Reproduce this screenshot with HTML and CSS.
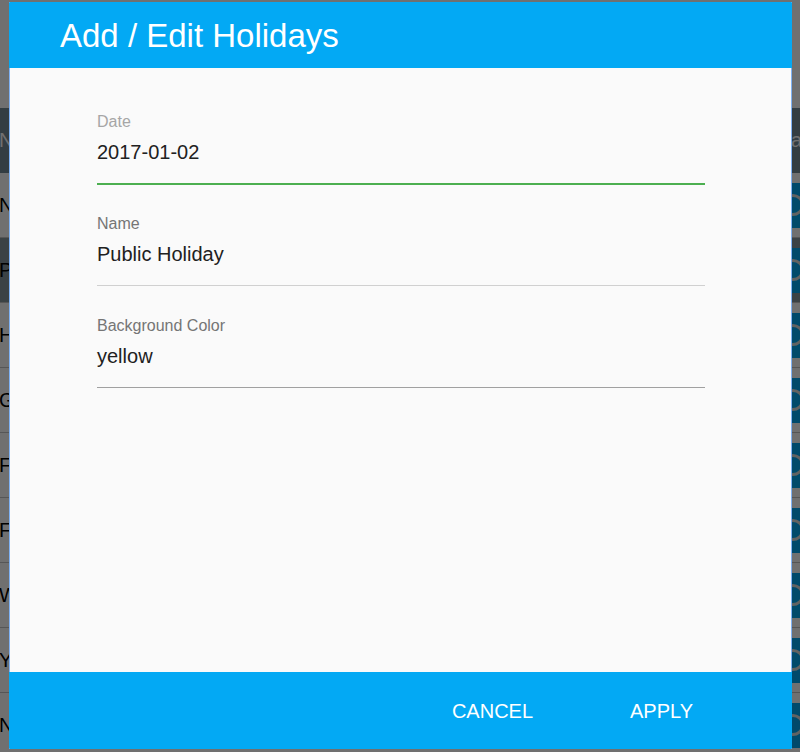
FILE: index.html
```html
<!DOCTYPE html>
<html lang="en">
<head>
<meta charset="utf-8">
<title>Add / Edit Holidays</title>
<link rel="stylesheet" href="styles.css">
</head>
<body>
<div class="page" aria-hidden="true">
  <div class="table">
    <div class="row head"><span class="cell-name">Na</span><span class="cell-end head-end">na</span></div>
    <div class="row"><span class="cell-name">Ne</span><span class="cell-end"><span class="btn"><span class="ring"></span></span></span></div>
    <div class="row selected"><span class="cell-name">Pu</span><span class="cell-end"><span class="btn"><span class="ring"></span></span></span></div>
    <div class="row"><span class="cell-name">Hu</span><span class="cell-end"><span class="btn"><span class="ring"></span></span></span></div>
    <div class="row"><span class="cell-name">Go</span><span class="cell-end"><span class="btn"><span class="ring"></span></span></span></div>
    <div class="row"><span class="cell-name">Fa</span><span class="cell-end"><span class="btn"><span class="ring"></span></span></span></div>
    <div class="row"><span class="cell-name">Fr</span><span class="cell-end"><span class="btn"><span class="ring"></span></span></span></div>
    <div class="row"><span class="cell-name">Wo</span><span class="cell-end"><span class="btn"><span class="ring"></span></span></span></div>
    <div class="row"><span class="cell-name">Yo</span><span class="cell-end"><span class="btn"><span class="ring"></span></span></span></div>
    <div class="row"><span class="cell-name">Na</span><span class="cell-end"><span class="btn"><span class="ring"></span></span></span></div>
  </div>
</div>
<div class="overlay"></div>
<div class="dialog">
  <div class="dialog-title">Add / Edit Holidays</div>
  <div class="dialog-body">
    <div class="field focused">
      <div class="label label-light">Date</div>
      <div class="value">2017-01-02</div>
    </div>
    <div class="field">
      <div class="label">Name</div>
      <div class="value">Public Holiday</div>
    </div>
    <div class="field dark-line">
      <div class="label">Background Color</div>
      <div class="value">yellow</div>
    </div>
  </div>
  <div class="dialog-actions">
    <button class="action">CANCEL</button>
    <button class="action">APPLY</button>
  </div>
</div>
</body>
</html>
```
FILE: styles.css
```css
html, body {
  margin: 0;
  padding: 0;
  width: 800px;
  height: 752px;
  overflow: hidden;
  font-family: "Liberation Sans", Arial, sans-serif;
  background: #ffffff;
}

.page {
  width: 800px;
  height: 752px;
  padding-top: 108px;
  box-sizing: border-box;
}

.table {
  display: flex;
  flex-direction: column;
}

.row {
  height: 65px;
  display: flex;
  align-items: center;
  justify-content: space-between;
  border-bottom: 1px solid #c4c4c4;
  box-sizing: border-box;
  font-size: 20px;
  color: #000;
  background: #fff;
}

.row.head {
  background: #748b96;
  color: #ffffff;
  border-bottom: none;
}

.row.selected {
  background: #87969e;
}

.cell-name {
  margin-left: -1px;
  white-space: nowrap;
}

.cell-end {
  width: 20px;
  height: 45px;
  display: flex;
  align-items: center;
}

.head-end {
  color: #ffffff;
  margin-left: -6px;
}

.btn {
  width: 40px;
  height: 45px;
  background: #03a9f4;
  display: flex;
  align-items: center;
  padding-left: 2px;
  box-sizing: border-box;
}

.ring {
  width: 16px;
  height: 16px;
  border: 3px solid #e0e0e0;
  border-radius: 50%;
}

.overlay {
  position: absolute;
  left: 0;
  top: 0;
  width: 800px;
  height: 752px;
  background: rgba(0, 0, 0, 0.56);
}

.dialog {
  position: absolute;
  left: 9px;
  top: 2px;
  width: 783px;
  height: 747px;
  box-sizing: border-box;
  border: 1px solid #7fb2f4;
  border-top-color: #03a9f4;
  border-bottom-color: #03a9f4;
  display: flex;
  flex-direction: column;
  background: #fafafa;
}

.dialog-title {
  height: 65px;
  line-height: 65px;
  background: #03a9f4;
  color: #ffffff;
  font-size: 33px;
  padding-left: 51px;
  margin: 0 -1px;
}

.dialog-body {
  flex: 1;
  padding: 44px 0 0 87px;
}

.field {
  width: 608px;
  padding-bottom: 17px;
  border-bottom: 1px solid #d0d0d0;
  margin-bottom: 30px;
}

.field.focused {
  border-bottom: 2px solid #4caf50;
  margin-bottom: 29px;
}

.field.dark-line {
  border-bottom-color: #a0a0a0;
}

.label {
  font-size: 16px;
  line-height: 20px;
  color: #757575;
  margin-bottom: 6px;
}

.label-light {
  color: #a6a6a6;
}

.value {
  font-size: 20px;
  line-height: 28px;
  color: #212121;
}

.dialog-actions {
  height: 76px;
  background: #03a9f4;
  display: flex;
  justify-content: flex-end;
  align-items: center;
  padding: 3px 46px 0 0;
  box-sizing: border-box;
  margin: 0 -1px;
}

.action {
  width: 169px;
  height: 48px;
  border: none;
  background: transparent;
  color: #ffffff;
  font-family: "Liberation Sans", Arial, sans-serif;
  font-size: 20px;
  padding: 0;
  text-align: center;
}
```
